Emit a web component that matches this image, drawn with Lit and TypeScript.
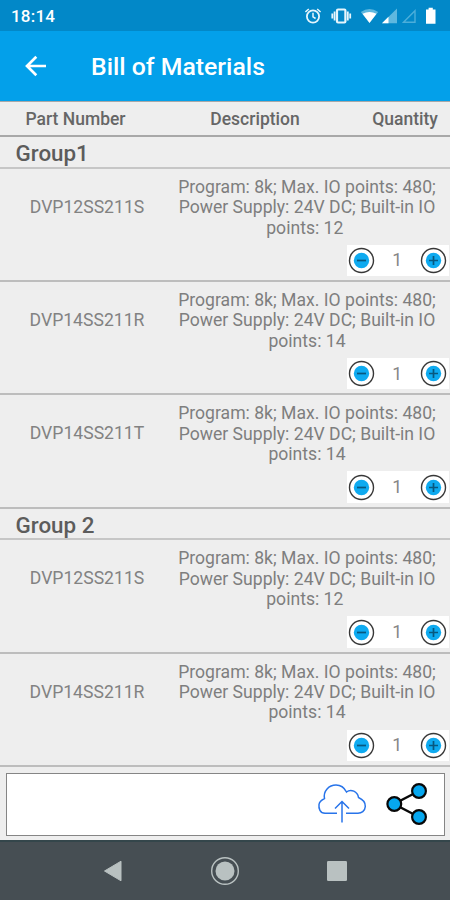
import { LitElement, html, css } from "lit";
import { customElement, property } from "lit/decorators.js";

interface Part { number: string; points: string; }
interface Group { name: string; parts: Part[]; }

const GROUPS: Group[] = [
  { name: "Group1", parts: [
    { number: "DVP12SS211S", points: "12\u00a0" },
    { number: "DVP14SS211R", points: "14" },
    { number: "DVP14SS211T", points: "14" },
  ] },
  { name: "Group 2", parts: [
    { number: "DVP12SS211S", points: "12\u00a0" },
    { number: "DVP14SS211R", points: "14" },
  ] },
];

@customElement("quantity-stepper")
export class QuantityStepper extends LitElement {
  @property({ type: Number }) value = 1;

  static styles = css`
    :host { display: flex; align-items: center; justify-content: space-between; box-sizing: border-box;
      width: 102px; height: 31.5px; padding: 0 2px 0 1.5px; background: #fff; color: #868686; font-size: 17.5px; }
    svg { display: block; width: 27px; height: 27px; }
  `;

  private button(plus: boolean) {
    return html`<svg viewBox="0 0 27 27" fill="none">
      <circle cx="13.5" cy="13.5" r="12" fill="#fff" stroke="#383838" stroke-width="1.4"/>
      <circle cx="13.5" cy="13.5" r="7.7" fill="#0eaaf0"/>
      <path d=${plus ? "M9 13.5h9M13.5 9v9" : "M9 13.5h9"} stroke="#08587f" stroke-width="1.7"/>
    </svg>`;
  }

  render() {
    return html`${this.button(false)}<span>${this.value}</span>${this.button(true)}`;
  }
}

@customElement("app-root")
export class AppRoot extends LitElement {
  static styles = css`
    :host { display: flex; flex-direction: column; width: 450px; height: 900px; overflow: hidden;
      background: #eee; font-family: Roboto, "Liberation Sans", sans-serif; color: #7e7e7e; }
    svg { display: block; flex: none; }
    .status { height: 30.5px; flex: none; box-sizing: border-box; display: flex; align-items: center;
      justify-content: space-between; background: #0288c8; color: #fff; padding: 2px 11px 0; }
    .time { font-size: 17px; font-weight: 500; letter-spacing: 0.2px; }
    .bar { height: 70.5px; flex: none; display: flex; align-items: center; background: #03a0ea; color: #fff;
      padding-left: 24px; }
    .title { margin: 2px 0 0 43px; font-size: 24.8px; font-weight: 500; white-space: nowrap; }
    .head { height: 36px; flex: none; box-sizing: border-box; display: grid; padding-top: 1px;
      grid-template-columns: 151px 208px 92px; align-items: center; justify-items: center;
      border-top: 1.5px solid #a8a8a8; border-bottom: 2px solid #a8a8a8; font-size: 17.5px; font-weight: 500;
      color: #666; white-space: nowrap; }
    .list { flex: none; }
    .group { height: 31.7px; box-sizing: border-box; border-bottom: 2px solid #c6c6c6; padding-left: 15.5px;
      font-size: 22.4px; font-weight: 500; line-height: 32px; color: #5c5c5c; }
    .row { height: 113.3px; box-sizing: border-box; border-bottom: 2px solid #bdbdbd; display: grid;
      grid-template-columns: 174px 266px; grid-template-rows: 76px 31.5px; font-size: 17.6px; }
    .number { text-align: center; line-height: 77px; color: #828282; }
    .text { padding-top: 8px; text-align: center; line-height: 20.4px; white-space: nowrap; }
    .qty { grid-column: 1 / -1; margin-left: 346.5px; }
    .panel { height: 63px; flex: none; box-sizing: border-box; margin: 6px 5px 0 6px; border: 1.5px solid #858585;
      background: #fff; display: flex; align-items: center; justify-content: flex-end; gap: 19px; padding-right: 16px; }
    .nav { margin-top: auto; height: 60px; flex: none; box-sizing: border-box; border-top: 2px solid #34464b;
      background: #464e53; display: flex; align-items: center; justify-content: center; gap: 86.5px; }
  `;

  private statusIcons() {
    return html`<svg width="134" height="20" viewBox="305 6 134 20" fill="none" stroke="#e6f5fc">
      <circle cx="313" cy="16.5" r="6.1" stroke-width="1.8"/>
      <path d="M313 12.8v4l2.6 1.7M305.4 12l3.4-3M320.6 12l-3.4-3" stroke-width="1.5"/>
      <rect x="337" y="9.5" width="8.4" height="13" rx="1" stroke-width="2.2"/>
      <path d="M334.6 11.5v9M347.8 11.5v9M332.3 13.5v5M350.2 13.5v5" stroke-width="1.8"/>
      <path d="M360.8 12Q369.5 6 378.2 12L369.5 22.8z" fill="#5fb8df" stroke="none"/>
      <path d="M362.5 13.7Q369.5 10.3 376.5 13.7L369.5 23z" fill="#fff" stroke="none"/>
      <path d="M382 23.2L397 8.5v14.7z" fill="#5fb8df" stroke="none"/>
      <path d="M382 23.2l6.5-6.4v6.4z" fill="#fff" stroke="none"/>
      <path d="M403.5 22.3L415 10.7v11.6z" stroke="#4caeda" stroke-width="1.4"/>
      <path d="M426 9.4h2.6V7.8h4.2v1.6h2.7v14.3H426z" fill="#fff" stroke="none"/>
    </svg>`;
  }

  private row(part: Part) {
    return html`<div class="row">
      <div class="number">${part.number}</div>
      <div class="text">Program: 8k; Max. IO points: 480;<br>Power Supply: 24V DC; Built-in IO<br>points: ${part.points}</div>
      <quantity-stepper class="qty" .value=${1}></quantity-stepper>
    </div>`;
  }

  render() {
    return html`
      <div class="status"><span class="time">18:14</span>${this.statusIcons()}</div>
      <div class="bar">
        <svg width="24" height="24" viewBox="0 0 24 24" fill="none" stroke="#fff" stroke-width="2.7">
          <path d="M22 12H3.5M12.3 2.7L3 12l9.3 9.3"/>
        </svg>
        <span class="title">Bill of Materials</span>
      </div>
      <div class="head"><span>Part Number</span><span>Description</span><span>Quantity</span></div>
      <div class="list">
        ${GROUPS.map((g) => html`<div class="group">${g.name}</div>${g.parts.map((p) => this.row(p))}`)}
      </div>
      <div class="panel">
        <svg width="50" height="44" viewBox="317 782 50 44" fill="none" stroke="#2874ea" stroke-width="1.5">
          <path d="M337 813.3H325C320 813 318.5 808.5 319 804.5C319.5 801 321.5 800 324.5 798.6C323 791 329 785 336 785C341 785 344.5 788 346.5 792C351 788.5 357.5 791.5 358.5 797.5C363 799.5 365.5 803 365.3 806.5C365 811 361.5 813.5 357.5 813.3H346"/>
          <path d="M342 822.5V802M335 808.5l7-7 7 7"/>
        </svg>
        <svg width="42" height="44" viewBox="386 782 42 44" fill="#06a7ef" stroke="#080808">
          <path d="M419 791L394 804l25 13" fill="none" stroke-width="2.4"/>
          <g stroke-width="2.2"><circle cx="394.3" cy="804" r="6.9"/><circle cx="419" cy="791" r="6.9"/><circle cx="419" cy="817" r="6.9"/></g>
        </svg>
      </div>
      <div class="nav">
        <svg width="20" height="22" viewBox="1 0 20 22" fill="#b9c1c1"><path d="M1.5 11L18 1.2v19.6z" stroke="#b9c1c1" stroke-linejoin="round"/></svg>
        <svg width="30" height="30" viewBox="0 0 30 30" fill="#b9c1c1"><circle cx="15" cy="15" r="9.5"/><circle cx="15" cy="15" r="13.3" fill="none" stroke="#b9c1c1" stroke-width="1.4"/></svg>
        <svg width="20" height="20" viewBox="0 0 20 20" fill="#b9c1c1"><rect width="20" height="20" rx="1.3"/></svg>
      </div>`;
  }
}
